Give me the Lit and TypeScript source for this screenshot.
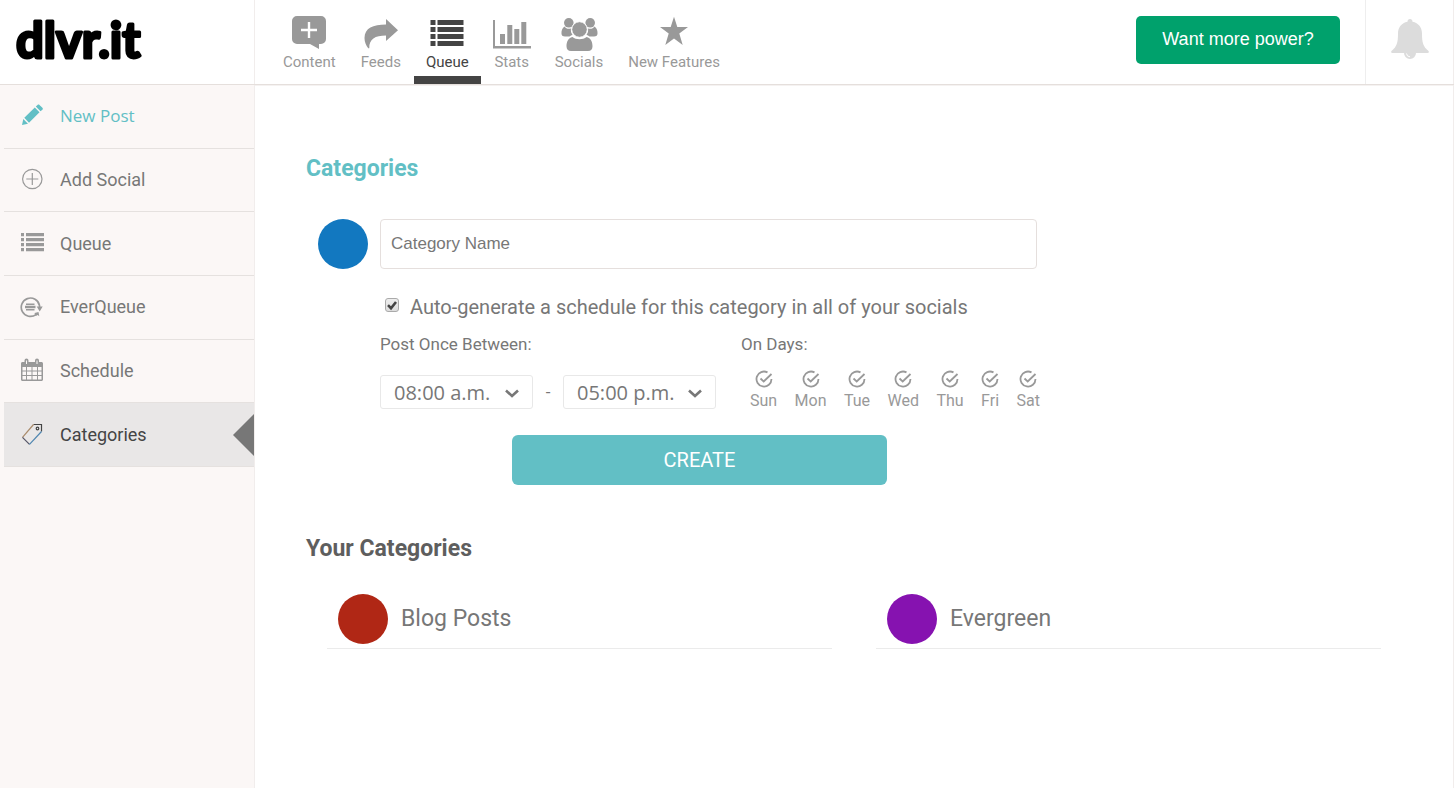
import { LitElement, html, svg, css } from "lit";
import { customElement, state } from "lit/decorators.js";
import { classMap } from "lit/directives/class-map.js";

const listRows = [0, 1, 2, 3];

const navIcons: Record<string, unknown> = {
  content: svg`<path d="M8 2h24a5 5 0 0 1 5 5v18a5 5 0 0 1-5 5h-2l0 5-9-5H8a5 5 0 0 1-5-5V7a5 5 0 0 1 5-5z"/><path d="M20 8v16M12 16h16" fill="none" stroke="#fff" stroke-width="2.4"/>`,
  feeds: svg`<path d="M25 5l12 11.2L25 27v-5.500C14 21.500 8 25 8.300 34.300H7.200C5 31.500 3.500 28 3.500 24 3.500 14 12 10.500 25 10.500z"/>`,
  queue: svg`${listRows.map(
    (i) => svg`<path d="M3.500 ${6 + i * 7}h5v5h-5zM10.500 ${6 + i * 7}h26v5h-26z"/>`
  )}`,
  stats: svg`<path d="M1 6h2v26h36v2.500H1zM8 20h5v10H8zM15.300 11h5v19h-5zM22.300 15h5v15h-5zM29.300 8h5v22h-5z"/>`,
  socials: svg`<circle cx="9.800" cy="8.800" r="4.800"/><circle cx="31.200" cy="8.800" r="4.800"/>
    <path d="M5.500 12.500C3 14 2.300 17 2.500 20c.2 1.700 1.500 2.500 3.500 2.500h4.500c1-1 2-1.500 3-1.800-1.500-2-1.900-4-1.500-6.200-3 .8-5 0-6.500-2zM35.500 12.500c2.500 1.500 3.200 4.500 3 7.500-.2 1.700-1.500 2.500-3.500 2.500h-4.500c-1-1-2-1.500-3-1.800 1.500-2 1.900-4 1.500-6.200 3 .8 5 0 6.500-2z"/>
    <circle cx="20.500" cy="15.500" r="7.800" stroke="#fff" stroke-width="1"/>
    <path d="M13.500 23c3.500 3 10.500 3 14 0 4.500 1 6 5 6 9.200 0 3-1.500 4.800-4.500 4.800H12c-3 0-4.500-1.800-4.500-4.800 0-4.200 1.500-8.200 6-9.200z"/>`,
  features: svg`<path d="M20 2.700l3.300 10.300H34l-8.700 6.500 3.400 11.500L20 24.500 11.300 31l3.400-11.500L6 13h10.700z"/>`,
};

const sideIcons: Record<string, unknown> = {
  post: svg`<path d="M2 21l1.300-6 4.700 4.700zM4.300 13.800L14.800 3.500l4.700 4.700L9 18.700zM15.800 2.500l1.700-1.600c.7-.6 1.400-.6 2 0l2.900 2.900c.6.7.6 1.300 0 2l-1.900 1.400z"/>`,
  add: svg`<g fill="none" stroke="#999" stroke-width="1.200"><circle cx="12.300" cy="12" r="9.700"/><path d="M12.300 6v12M6.300 12h12"/></g>`,
  queue: svg`${listRows.map(
    (i) => svg`<path d="M1 ${2 + i * 5}h3v3.300h-3zM6 ${2 + i * 5}h18v3.300H6z"/>`
  )}`,
  ever: svg`<path d="M16 19.600A9.200 9.200 0 1 1 19.500 10.500v2" fill="none" stroke="#999" stroke-width="1.700"/><path d="M16.700 11.500h6L19.700 16.500zM14.500 18l4-1 .8 4.200-1.600-1.300-2 1.200z"/><path d="M6 8.600h8.500v1.400H6zM5 10.800h10.500v2.400H5zM6 14h8.500v1.400H6z"/>`,
  schedule: svg`<path fill-rule="evenodd" d="M2.500 4h2V2.500a2 2 0 0 1 4 0V4h6.500V2.500a2 2 0 0 1 4 0V4h2.500c.8 0 1.500.6 1.500 1.500v16c0 .8-.7 1.500-1.500 1.500h-19c-.9 0-1.500-.7-1.500-1.500v-16C1 4.600 1.600 4 2.500 4zM2.500 9v3.500H6V9zM7 9v3.500h4.500V9zM12.500 9v3.500H17V9zM18 9v3.500h3.500V9zM2.500 13.500V17H6v-3.500zM7 13.500V17h4.500v-3.500zM12.500 13.500V17H17v-3.500zM18 13.500V17h3.500v-3.500zM2.500 18v3.500H6V18zM7 18v3.500h4.500V18zM12.500 18v3.500H17V18zM18 18v3.500h3.500V18zM6 2.500V6h1V2.500zM16.500 2.500V6h1V2.500z"/>`,
  tag: svg`<g fill="none" stroke-width="1.200"><path d="M13.500 2.500H21.500V9.500" stroke="#444"/><path d="M13.500 2.500L2.500 15.300" stroke="#a98a6a"/><path d="M2.500 15.300l7 7" stroke="#556"/><path d="M21.500 9.500l-12 12.800" stroke="#4f86b0"/><circle cx="17.500" cy="6.500" r="1.300" stroke="#444"/></g>`,
};

const navItems = [
  { id: "content", label: "Content" },
  { id: "feeds", label: "Feeds" },
  { id: "queue", label: "Queue" },
  { id: "stats", label: "Stats" },
  { id: "socials", label: "Socials" },
  { id: "features", label: "New Features" },
];

const sideItems = [
  { id: "post", label: "New Post" },
  { id: "add", label: "Add Social" },
  { id: "queue", label: "Queue" },
  { id: "ever", label: "EverQueue" },
  { id: "schedule", label: "Schedule" },
  { id: "tag", label: "Categories" },
];

@customElement("app-header")
class AppHeader extends LitElement {
  static styles = css`
    :host {
      display: flex;
      height: 84px;
      border-bottom: 1px solid #e5dfdc;
      box-shadow: 0 1px 0 #f5f2f1;
      background: #fff;
      font-family: Roboto, sans-serif;
    }
    .brand {
      box-sizing: border-box;
      width: 255px;
      flex: none;
      border-right: 1px solid #f1edec;
    }
    .logo {
      display: block;
      width: 160px;
      height: 84px;
    }
    .logo text {
      font: 700 49px Lato, sans-serif;
      stroke: #000;
      stroke-width: 3px;
      stroke-linejoin: round;
    }
    nav {
      display: flex;
      flex: 1;
      gap: 1px;
      padding-left: 16px;
    }
    .tab {
      box-sizing: border-box;
      display: flex;
      flex-direction: column;
      align-items: center;
      padding: 14px 12px 0;
      border-bottom: 8px solid transparent;
      color: #999;
      fill: #999;
      font-size: 15px;
      line-height: 20px;
      text-decoration: none;
      white-space: nowrap;
    }
    .tab.on {
      color: #444;
      fill: #444;
      border-color: #444;
    }
    .tab svg {
      width: 40px;
      height: 38px;
      margin: 0 -2px;
    }
    .power {
      align-self: flex-start;
      min-width: 204px;
      height: 48px;
      margin: 16px 25px 0 0;
      padding: 0 26px 2px;
      border: 0;
      border-radius: 5px;
      background: #00a16c;
      color: #fff;
      font: 18px "Liberation Sans", Arial, sans-serif;
    }
    .bell {
      box-sizing: border-box;
      width: 89px;
      padding: 0;
      border: 0;
      border-left: 1px solid #eee;
      border-right: 1px solid #f1edec;
      background: none;
      fill: #dcdcdc;
    }
    .bell svg {
      display: block;
      width: 40px;
      height: 42px;
      margin: -6px auto 0;
    }
  `;

  render() {
    return html`
      <div class="brand">
        <svg class="logo" viewBox="0 0 160 84"><text x="16" y="58">dlvr.it</text></svg>
      </div>
      <nav>
        ${navItems.map(
          (n) => html`<a href="#" class=${classMap({ tab: true, on: n.id === "queue" })}>
            <svg viewBox="0 0 40 38" aria-hidden="true">${navIcons[n.id]}</svg>
            <span>${n.label}</span>
          </a>`
        )}
      </nav>
      <button class="power">Want more power?</button>
      <button class="bell" aria-label="Notifications">
        <svg viewBox="0 0 40 42">
          <path d="M20 1c1.500 0 2.500 1 2.500 2.800C28.500 5 32 9.500 32 15.500c0 9 1 13 6.500 17.500.8 1 .3 2-1 2H26a6 6 0 0 1-12 0H2.500c-1.300 0-1.800-1-1-2C7 28.500 8 24.500 8 15.500 8 9.500 11.500 5 17.500 3.800 17.500 2 18.500 1 20 1z"/>
          <path d="M16.500 35.500a3.600 3.600 0 0 0 3.500 3.300" fill="none" stroke="#fff"/>
        </svg>
      </button>
    `;
  }
}

@customElement("app-sidebar")
class AppSidebar extends LitElement {
  static styles = css`
    :host {
      box-sizing: border-box;
      display: block;
      width: 255px;
      flex: none;
      padding-left: 4px;
      border-right: 1px solid #f1edec;
      background: #fbf7f6;
      font: 18px/24px Roboto, sans-serif;
    }
    ul {
      display: grid;
      grid-template-rows: repeat(6, 1fr);
      height: 382px;
      margin: 0;
      padding: 0;
      list-style: none;
    }
    li {
      display: flex;
      border-bottom: 1px solid #e5e1df;
    }
    a {
      position: relative;
      display: flex;
      flex: 1;
      align-items: center;
      gap: 16px;
      padding-left: 16px;
      color: #777;
      fill: #999;
      text-decoration: none;
    }
    svg {
      width: 24px;
      height: 25px;
    }
    .post {
      color: #62bfc5;
      fill: #62bfc5;
      font-family: "Open Sans", sans-serif;
      font-size: 17px;
    }
    .tag {
      background: #e9e7e7;
      color: #444;
    }
    .tag::after {
      content: "";
      position: absolute;
      right: 0;
      top: calc(50% - 21px);
      border: 21px solid transparent;
      border-left-width: 0;
      border-right-color: #777;
    }
  `;

  render() {
    return html`<ul>
      ${sideItems.map(
        (s) => html`<li>
          <a href="#" class=${s.id}>
            <svg viewBox="0 0 24 25" aria-hidden="true">${sideIcons[s.id]}</svg>
            <span>${s.label}</span>
          </a>
        </li>`
      )}
    </ul>`;
  }
}

@customElement("category-form")
class CategoryForm extends LitElement {
  @state() private days = ["Sun", "Mon", "Tue", "Wed", "Thu", "Fri", "Sat"];

  static styles = css`
    :host {
      display: block;
      color: #777;
      font: 17px/20px Roboto, sans-serif;
    }
    form {
      display: grid;
      grid-template-columns: 50px minmax(0, 657px);
      column-gap: 12px;
      padding-left: 12px;
    }
    .swatch {
      width: 50px;
      height: 50px;
      padding: 0;
      border: 0;
      border-radius: 50%;
      background: #1278c0;
    }
    .name {
      box-sizing: border-box;
      width: 100%;
      height: 50px;
      padding: 0 10px;
      border: 1px solid #e5dfdd;
      border-radius: 4px;
      color: #777;
      font: 17px "Liberation Sans", Arial, sans-serif;
    }
    .name::placeholder {
      color: #777;
      opacity: 1;
    }
    .body {
      grid-column: 2;
    }
    .auto {
      display: flex;
      gap: 11px;
      margin-top: 26px;
      padding-left: 5px;
      font-size: 20px;
      line-height: 24px;
    }
    .auto input {
      appearance: none;
      flex: none;
      box-sizing: border-box;
      width: 14px;
      height: 14px;
      margin: 3px 0 0;
      border: 1px solid #aaa;
      border-radius: 3px;
      background: linear-gradient(#eee, #ddd);
    }
    .box {
      display: grid;
    }
    .box > * {
      grid-area: 1 / 1;
    }
    .box svg {
      width: 14px;
      height: 14px;
      margin-top: 3px;
      pointer-events: none;
    }
    .box input:not(:checked) + svg {
      visibility: hidden;
    }
    .cols {
      display: flex;
      gap: 25px;
      margin-top: 15px;
    }
    .range {
      display: flex;
      align-items: center;
      margin-top: 21px;
    }
    .dash {
      width: 30px;
      text-align: center;
    }
    .time {
      display: grid;
      align-items: center;
    }
    .time > * {
      grid-area: 1 / 1;
    }
    .time select {
      appearance: none;
      width: 153px;
      height: 34px;
      padding: 0 13px;
      border: 1px solid #e8e8e8;
      border-radius: 3px;
      background: #fff;
      color: #777;
      font: 20px "Open Sans", sans-serif;
    }
    .time svg {
      justify-self: end;
      width: 14px;
      height: 9px;
      margin: 3px 14px 0 0;
      pointer-events: none;
    }
    .days {
      display: flex;
      justify-content: space-between;
      width: 290px;
      margin-top: 16px;
      padding-left: 9px;
      color: #999;
      font-size: 16px;
    }
    .days label {
      display: grid;
      justify-items: center;
    }
    .days input {
      appearance: none;
      grid-area: 1 / 1;
      width: 18px;
      height: 18px;
      margin: 0;
    }
    .days svg {
      grid-area: 1 / 1;
      width: 18px;
      height: 18px;
      pointer-events: none;
    }
    .days input:not(:checked) + svg .tick {
      visibility: hidden;
    }
    .days span {
      margin-top: 3px;
    }
    .create {
      display: block;
      width: 375px;
      height: 50px;
      margin: 24px 0 0 132px;
      border: 0;
      border-radius: 6px;
      background: #62bfc5;
      color: #fff;
      font: 20px Roboto, sans-serif;
    }
  `;

  private time(label: string, value: string) {
    return html`<span class="time">
      <select aria-label=${label}>
        <option>${value}</option>
      </select>
      <svg viewBox="0 0 14 9" aria-hidden="true"><path d="M1 1.500l6 5.500 6-5.500" fill="none" stroke="#777" stroke-width="2.600"/></svg>
    </span>`;
  }

  render() {
    return html`<form @submit=${(e: Event) => e.preventDefault()}>
      <button type="button" class="swatch" aria-label="Category colour"></button>
      <input class="name" type="text" placeholder="Category Name" aria-label="Category Name" />
      <div class="body">
        <label class="auto">
          <span class="box">
            <input type="checkbox" checked />
            <svg viewBox="0 0 14 14" aria-hidden="true"><path d="M3 7.200l3 3L11 4" fill="none" stroke="#444" stroke-width="2.600"/></svg>
          </span>
          <span>Auto-generate a schedule for this category in all of your socials</span>
        </label>
        <div class="cols">
          <div>
            <div>Post Once Between:</div>
            <div class="range">
              ${this.time("From", "08:00 a.m.")}
              <span class="dash">-</span>
              ${this.time("To", "05:00 p.m.")}
            </div>
          </div>
          <div>
            <div>On Days:</div>
            <div class="days">
              ${this.days.map(
                (d) => html`<label>
                  <input type="checkbox" checked />
                  <svg viewBox="0 0 18 18" aria-hidden="true" fill="none" stroke="#999" stroke-width="1.800">
                    <path d="M12.500 2.400A7.500 7.500 0 1 0 16.500 9"/>
                    <path class="tick" d="M5.500 8.500l3.200 3L16.500 4"/>
                  </svg>
                  <span>${d}</span>
                </label>`
              )}
            </div>
          </div>
        </div>
        <button class="create">CREATE</button>
      </div>
    </form>`;
  }
}

@customElement("app-root")
class AppRoot extends LitElement {
  static styles = css`
    :host {
      display: flex;
      flex-direction: column;
      min-height: 100vh;
      background: #fff;
      font-family: Roboto, sans-serif;
    }
    .page {
      display: flex;
      flex: 1;
    }
    main {
      flex: 1;
      min-width: 0;
      padding: 70px 51px 40px;
      border-right: 1px solid #f1edec;
    }
    h1,
    h2 {
      margin: 0;
      font-size: 23px;
      line-height: 28px;
      font-weight: 700;
    }
    h1 {
      margin-bottom: 36px;
      color: #62bfc5;
    }
    h2 {
      margin-top: 50px;
      color: #5e5e5e;
    }
    .list {
      display: grid;
      grid-template-columns: 1fr 1fr;
      gap: 44px;
      margin: 31px 21px 0;
      padding: 0;
      list-style: none;
    }
    .list li {
      display: flex;
      align-items: center;
      gap: 13px;
      padding: 0 11px 4px;
      border-bottom: 1px solid #ebebeb;
      color: #777;
      font-size: 23px;
      line-height: 28px;
    }
    .dot {
      width: 50px;
      height: 50px;
      border-radius: 50%;
    }
    .red {
      background: #b02715;
    }
    .purple {
      background: #8612b0;
    }
  `;

  render() {
    return html`
      <app-header></app-header>
      <div class="page">
        <app-sidebar></app-sidebar>
        <main>
          <h1>Categories</h1>
          <category-form></category-form>
          <h2>Your Categories</h2>
          <ul class="list">
            <li><span class="dot red"></span>Blog Posts</li>
            <li><span class="dot purple"></span>Evergreen</li>
          </ul>
        </main>
      </div>
    `;
  }
}
